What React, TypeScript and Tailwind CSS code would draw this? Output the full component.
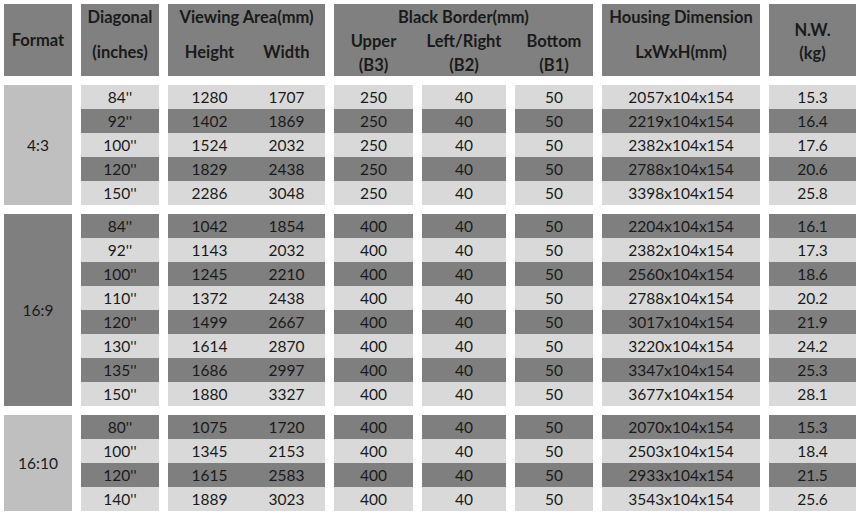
const groups = [
  {
    format: "4:3",
    formatBg: "bg-[#bfbfbf]",
    firstDark: false,
    rows: [
      ["84''", "1280", "1707", "250", "40", "50", "2057x104x154", "15.3"],
      ["92''", "1402", "1869", "250", "40", "50", "2219x104x154", "16.4"],
      ["100''", "1524", "2032", "250", "40", "50", "2382x104x154", "17.6"],
      ["120''", "1829", "2438", "250", "40", "50", "2788x104x154", "20.6"],
      ["150''", "2286", "3048", "250", "40", "50", "3398x104x154", "25.8"],
    ],
  },
  {
    format: "16:9",
    formatBg: "bg-[#7f7f7f]",
    firstDark: true,
    rows: [
      ["84''", "1042", "1854", "400", "40", "50", "2204x104x154", "16.1"],
      ["92''", "1143", "2032", "400", "40", "50", "2382x104x154", "17.3"],
      ["100''", "1245", "2210", "400", "40", "50", "2560x104x154", "18.6"],
      ["110''", "1372", "2438", "400", "40", "50", "2788x104x154", "20.2"],
      ["120''", "1499", "2667", "400", "40", "50", "3017x104x154", "21.9"],
      ["130''", "1614", "2870", "400", "40", "50", "3220x104x154", "24.2"],
      ["135''", "1686", "2997", "400", "40", "50", "3347x104x154", "25.3"],
      ["150''", "1880", "3327", "400", "40", "50", "3677x104x154", "28.1"],
    ],
  },
  {
    format: "16:10",
    formatBg: "bg-[#bfbfbf]",
    firstDark: true,
    rows: [
      ["80''", "1075", "1720", "400", "40", "50", "2070x104x154", "15.3"],
      ["100''", "1345", "2153", "400", "40", "50", "2503x104x154", "18.4"],
      ["120''", "1615", "2583", "400", "40", "50", "2933x104x154", "21.5"],
      ["140''", "1889", "3023", "400", "40", "50", "3543x104x154", "25.6"],
    ],
  },
];

// column blocks: which data indexes go in each block
const blocks = [
  { w: "w-[78px]", cols: [0] },
  { w: "w-[157px]", cols: [1, 2] },
  { w: "w-[79px]", cols: [3] },
  { w: "w-[84px]", cols: [4] },
  { w: "w-[78px]", cols: [5] },
  { w: "w-[158px]", cols: [6] },
  { w: "w-[87px]", cols: [7] },
];

const Group = ({ g }: { g: (typeof groups)[number] }) => {
  return (
    <div className="flex gap-[9px]">
      <div className={`w-[68px] ${g.formatBg} flex items-center justify-center pt-[2px]`}>{g.format}</div>
      {blocks.map((b, bi) => (
        <div key={bi} className={`${b.w} flex flex-col`}>
          {g.rows.map((r, ri) => {
            const dark = (ri % 2 === 0) === g.firstDark;
            return (
              <div
                key={ri}
                className={`h-6 flex items-center pt-[2px] ${dark ? "bg-[#7f7f7f]" : "bg-[#d9d9d9]"}`}
              >
                {b.cols.length === 1 ? (
                  <span className="w-full text-center">{r[b.cols[0]]}</span>
                ) : (
                  <>
                    <span className="w-[80px] text-center pl-[3px]">{r[b.cols[0]]}</span>
                    <span className="w-[77px] text-center">{r[b.cols[1]]}</span>
                  </>
                )}
              </div>
            );
          })}
        </div>
      ))}
    </div>
  );
}

export default function App() {
  return (
    <div className="w-[862px] h-[519px] bg-white pl-1 pt-1 text-[15.5px] text-[#1a1a1a] font-['Lato',sans-serif] leading-none">
      <div className="flex gap-[9px] h-[72px] font-bold text-[16.5px]">
        <div className="w-[68px] bg-[#808080] flex items-center justify-center">Format</div>
        <div className="w-[78px] bg-[#808080] flex flex-col items-center">
          <span className="mt-[5px]">Diagonal</span>
          <span className="mt-[18px]">(inches)</span>
        </div>
        <div className="w-[157px] bg-[#808080] flex flex-col">
          <span className="mt-[5px] text-center">Viewing Area(mm)</span>
          <div className="flex mt-[18px]">
            <span className="w-[80px] text-center pl-[3px]">Height</span>
            <span className="w-[77px] text-center">Width</span>
          </div>
        </div>
        <div className="w-[259px] bg-[#808080] flex flex-col">
          <span className="mt-[5px] text-center">Black Border(mm)</span>
          <div className="flex mt-[7px]">
            <span className="w-[79px] text-center">Upper</span>
            <span className="w-[9px]" />
            <span className="w-[84px] text-center">Left/Right</span>
            <span className="w-[9px]" />
            <span className="w-[78px] text-center">Bottom</span>
          </div>
          <div className="flex mt-[8px]">
            <span className="w-[79px] text-center">(B3)</span>
            <span className="w-[9px]" />
            <span className="w-[84px] text-center">(B2)</span>
            <span className="w-[9px]" />
            <span className="w-[78px] text-center">(B1)</span>
          </div>
        </div>
        <div className="w-[158px] bg-[#808080] flex flex-col items-center">
          <span className="mt-[5px]">Housing Dimension</span>
          <span className="mt-[18px]">LxWxH(mm)</span>
        </div>
        <div className="w-[87px] bg-[#808080] flex flex-col items-center">
          <span className="mt-[18px]">N.W.</span>
          <span className="mt-[6px]">(kg)</span>
        </div>
      </div>
      <div className="flex flex-col gap-[9px] mt-[9px]">
        {groups.map((g) => (
          <Group key={g.format} g={g} />
        ))}
      </div>
    </div>
  );
}
